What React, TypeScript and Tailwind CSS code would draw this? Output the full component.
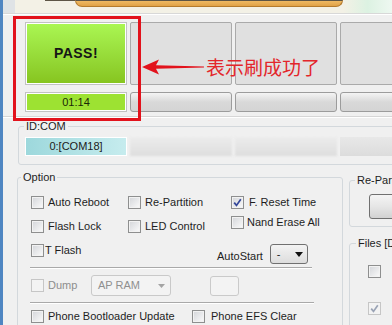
import React from "react";

interface ICheckProps {
  checked?: boolean;
  disabled?: boolean;
}

const Check: React.FC<ICheckProps> = ({ checked, disabled }) => (
  <span
    className={`flex h-[13px] w-[13px] shrink-0 items-center justify-center border ${
      disabled
        ? "border-[#c6c6c6] bg-[#f3f3f3]"
        : "border-[#8e8f8f] bg-gradient-to-br from-[#d3d5d9] to-[#fbfbfb] shadow-[inset_0_0_0_1px_#f2f2f2]"
    }`}
  >
    {checked && (
      <svg width="9" height="9" viewBox="0 0 9 9">
        <path
          d="M1.2 4.6 L3.5 7.4 L7.8 1.2"
          fill="none"
          stroke={disabled ? "#9aa3b5" : "#34479a"}
          strokeWidth="1.7"
        />
      </svg>
    )}
  </span>
);

interface IOptProps extends ICheckProps {
  label: string;
  gap?: string;
  className?: string;
}

const Opt: React.FC<IOptProps> = ({ label, checked, disabled, gap = "gap-[4px]", className = "" }) => (
  <div className={`flex items-center whitespace-nowrap ${gap} ${className}`}>
    <Check checked={checked} disabled={disabled} />
    <span className={disabled ? "text-[#8d8d8d]" : "text-[#1e1e1e]"}>{label}</span>
  </div>
);

const Sep: React.FC<{ className?: string }> = ({ className = "" }) => (
  <div className={`h-[2px] border-t border-[#a9a9a9] border-b border-b-white ${className}`} />
);

const App: React.FC = () => {
  return (
    <div className="relative flex h-[325px] w-[392px] items-start overflow-hidden bg-[#f0f0f0] font-['Liberation_Sans',Arial,sans-serif] text-[11px] leading-[13px] text-[#1e1e1e]">
      {/* window frame */}
      <div className="h-[325px] w-[3px] shrink-0 bg-[#4f86c2]" />

      <div className="flex min-w-0 flex-1 flex-col">
        {/* banner */}
        <div className="flex h-[13px] shrink-0 items-start bg-[#f3f1e6]">
          <div className="h-full w-[12px] bg-[#dfe3e6]" />
          <div className="w-[30px]" />
          <div className="h-px w-[30px] bg-[#5d5546]" />
          <div className="h-[7px] w-[268px] rounded-b-[7px] border border-t-[#5d5546] border-[#b57b2c] bg-gradient-to-b from-[#efb963] to-[#e0a247]" />
          <div className="h-full flex-1 bg-gradient-to-r from-[#f3f1e6] via-[#dcf2e2] to-[#eef8f1]" />
        </div>
        <div className="h-px shrink-0 bg-[#d8d8d8]" />
        <div className="h-px shrink-0 bg-white" />

        {/* port slots */}
        <div className="shrink-0 pl-[22px] pt-[7px]">
          <div className="flex gap-[3px]">
            <div className="h-[63px] w-[102px] shrink-0 border border-[#c2c2c2] bg-white p-px">
              <div className="flex h-full w-full items-center justify-center bg-gradient-to-b from-[#aaf652] to-[#87c51f] text-[14px] font-bold tracking-[0.5px] text-[#161616]">
                PASS!
              </div>
            </div>
            <div className="h-[63px] w-[102px] shrink-0 rounded-[2px] border border-[#aaaaaa] bg-[#e0e0e0]" />
            <div className="h-[63px] w-[102px] shrink-0 rounded-[2px] border border-[#aaaaaa] bg-[#e0e0e0]" />
            <div className="h-[63px] w-[102px] shrink-0 rounded-[2px] border border-[#aaaaaa] bg-[#e0e0e0]" />
          </div>
          <div className="mt-[7px] flex gap-[3px]">
            <div className="h-[20px] w-[102px] shrink-0 border border-[#c2c2c2] bg-white p-px">
              <div className="flex h-full w-full items-center justify-center bg-[#9de232] text-[#1a2806]">01:14</div>
            </div>
            <div className="h-[20px] w-[102px] shrink-0 rounded-[3px] border border-[#9c9c9c] bg-gradient-to-b from-[#f4f4f4] via-[#d9d9d9] to-[#d4d4d4]" />
            <div className="h-[20px] w-[102px] shrink-0 rounded-[3px] border border-[#9c9c9c] bg-gradient-to-b from-[#f4f4f4] via-[#d9d9d9] to-[#d4d4d4]" />
            <div className="h-[20px] w-[102px] shrink-0 rounded-[3px] border border-[#9c9c9c] bg-gradient-to-b from-[#f4f4f4] via-[#d9d9d9] to-[#d4d4d4]" />
          </div>
        </div>

        <div className="mt-[4px] h-[2px] shrink-0 border-t border-[#d6d6d6] border-b border-b-white" />

        {/* ID:COM */}
        <fieldset className="ml-[15px] mt-[2px] w-[390px] shrink-0 rounded-[3px] border border-[#d3d8dc]">
          <legend className="ml-[5px] px-[2px] leading-[13px]">ID:COM</legend>
          <div className="mt-[4px] flex gap-[3px] pb-[8px] pl-[6px]">
            <div className="flex h-[19px] w-[102px] shrink-0 items-center justify-center border border-white bg-gradient-to-r from-[#9dd8dc] to-[#c6ecee] text-[#202020]">
              0:[COM18]
            </div>
            <div className="h-[19px] w-[102px] shrink-0 bg-gradient-to-b from-[#ececec] to-[#dedede] blur-[1px]" />
            <div className="h-[19px] w-[102px] shrink-0 bg-gradient-to-b from-[#ececec] to-[#dedede] blur-[1px]" />
            <div className="h-[19px] w-[102px] shrink-0 bg-gradient-to-b from-[#e8e8e8] to-[#dcdcdc]" />
          </div>
        </fieldset>

        <div className="mt-[6px] flex shrink-0 items-start">
          {/* Option */}
          <fieldset className="ml-[14px] w-[326px] shrink-0 rounded-[3px] border border-[#d3d8dc]">
            <legend className="ml-[3px] px-[2px] leading-[13px]">Option</legend>
            <div className="pb-[10px] pl-[13px]">
              <div className="mt-[8px] flex h-[20px] items-center">
                <Opt label="Auto Reboot" className="w-[97px]" />
                <Opt label="Re-Partition" className="w-[103px]" />
                <Opt label="F. Reset Time" checked gap="gap-[5px]" />
              </div>
              <div className="mt-[4px] flex h-[20px] items-center">
                <Opt label="Flash Lock" className="w-[97px]" />
                <Opt label="LED Control" className="w-[103px]" />
                <Opt label="Nand Erase All" gap="gap-[3px]" className="-mt-[7px]" />
              </div>
              <div className="mt-[4px] flex h-[26px] items-start">
                <Opt label="T Flash" gap="gap-[1px]" className="mt-[4px] w-[186px]" />
                <div className="mt-[4px] flex items-center gap-[7px]">
                  <span className="mt-[5px]">AutoStart</span>
                  <div className="flex h-[20px] w-[38px] items-center justify-between rounded-[3px] border border-[#707070] bg-gradient-to-b from-[#f3f3f3] to-[#dddddd] pl-[6px] pr-[4px]">
                    <span>-</span>
                    <svg width="8" height="5" viewBox="0 0 8 5">
                      <path d="M0 0 H8 L4 5 Z" fill="#111111" />
                    </svg>
                  </div>
                </div>
              </div>
              <Sep className="ml-[-1px] mt-[1px] w-[282px]" />
              <div className="mt-[6px] flex h-[21px] items-center">
                <Opt label="Dump" disabled className="w-[60px]" />
                <div className="flex h-[21px] w-[80px] items-center justify-between rounded-[3px] border border-[#c9c9c9] bg-[#f3f3f3] pl-[6px] pr-[5px] text-[#8f8f8f]">
                  <span>AP RAM</span>
                  <svg width="7" height="4" viewBox="0 0 7 4">
                    <path d="M0 0 H7 L3.5 4 Z" fill="#a4a4a4" />
                  </svg>
                </div>
                <div className="ml-[39px] h-[20px] w-[29px] rounded-[3px] border border-[#cacaca] bg-[#f3f3f3]" />
              </div>
              <Sep className="ml-[-1px] mt-[6px] w-[284px]" />
              <div className="flex h-[24px] items-center">
                <Opt label="Phone Bootloader Update" className="w-[161px]" />
                <Opt label="Phone EFS Clear" gap="gap-[6px]" />
              </div>
            </div>
          </fieldset>

          {/* right column */}
          <div className="ml-[6px] flex shrink-0 flex-col">
            <fieldset className="mt-[3px] w-[110px] rounded-[3px] border border-[#d3d8dc]">
              <legend className="ml-[5px] whitespace-nowrap px-[2px] leading-[13px]">Re-Partition</legend>
              <div className="pb-[7px] pl-[19px] pt-[7px]">
                <div className="h-[25px] w-[70px] rounded-[3px] border border-[#707070] bg-gradient-to-b from-[#f4f4f4] via-[#e6e6e6] to-[#d2d2d2]" />
              </div>
            </fieldset>
            <fieldset className="mt-[10px] w-[110px] rounded-[3px] border border-[#d3d8dc]">
              <legend className="ml-[6px] whitespace-nowrap px-[2px] leading-[13px]">Files [Download]</legend>
              <div className="pb-[20px] pl-[18px]">
                <div className="mt-[15px]">
                  <Check />
                </div>
                <div className="mt-[24px]">
                  <Check checked disabled />
                </div>
              </div>
            </fieldset>
          </div>
        </div>
      </div>

      {/* annotation */}
      <div className="pointer-events-none absolute left-[13px] top-[16px] h-[105px] w-[128px] border-[3px] border-[#e2121c]" />
      <svg className="absolute left-[140px] top-[57px]" width="66" height="20" viewBox="0 0 66 20">
        <path d="M2 10 L19 2.5 L16 8.3 L64 9.6 L64 10.4 L16 11.7 L19 17.5 Z" fill="#e2121c" />
      </svg>
      <span className="absolute left-[206px] top-[57px] whitespace-nowrap font-['Noto_Sans_CJK_SC',sans-serif] text-[19px] leading-[20px] text-[#e3262b]">
        表示刷成功了
      </span>
    </div>
  );
};

export default App;
